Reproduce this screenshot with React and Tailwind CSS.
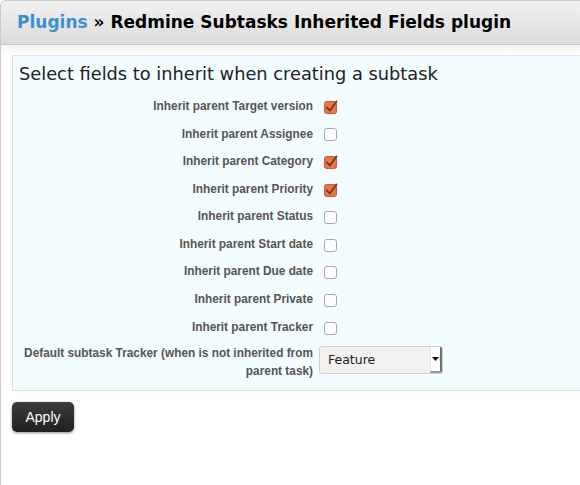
import React from 'react';

const fields = [
  { label: 'Inherit parent Target version', checked: true },
  { label: 'Inherit parent Assignee', checked: false },
  { label: 'Inherit parent Category', checked: true },
  { label: 'Inherit parent Priority', checked: true },
  { label: 'Inherit parent Status', checked: false },
  { label: 'Inherit parent Start date', checked: false },
  { label: 'Inherit parent Due date', checked: false },
  { label: 'Inherit parent Private', checked: false },
  { label: 'Inherit parent Tracker', checked: false },
];

const Checkbox = ({ checked }) => (
  <svg width="14" height="14" viewBox="0 0 14 14" className="ml-[5px] block">
    {checked ? (
      <>
        <rect x="0.5" y="1.5" width="12" height="12" rx="2" fill="#e8734a" stroke="#c85d38" />
        <path d="M3 7.5 L5.8 10.5 L12.5 1.5" fill="none" stroke="#6a3626" strokeWidth="1.8" strokeLinecap="round" strokeLinejoin="round" />
      </>
    ) : (
      <rect x="0.5" y="1.5" width="12" height="12" rx="2.5" fill="#ffffff" stroke="#a9a9a9" />
    )}
  </svg>
);

const App = () => {
  return (
    <div className="w-[580px] h-[485px] overflow-hidden bg-white" style={{ fontFamily: '"Liberation Sans", Arial, sans-serif' }}>
      <div className="w-[620px] h-[520px] border-l border-t border-[#c9c9c9] rounded-tl-[6px] overflow-hidden">
        {/* Header */}
        <div className="h-[44px] bg-gradient-to-b from-[#f1f1f1] to-[#dcdcdc] border-b border-[#c6c6c6] flex items-center pl-[16px]">
          <h2 className="text-[17px] font-bold text-black" style={{ fontFamily: '"DejaVu Sans", sans-serif' }}>
            <span className="text-[#3d8fd0]">Plugins</span> » Redmine Subtasks Inherited Fields plugin
          </h2>
        </div>
        <div className="h-[10px] bg-gradient-to-b from-[#f3f3f3] to-white" />

        {/* Settings box */}
        <div className="ml-[11px] border border-[#dfe3e3] bg-[#f3fcff] pt-[7px] pb-[10px]">
          <h3 className="pl-[6px] text-[17.8px] leading-[22px] text-[#222]" style={{ fontFamily: '"DejaVu Sans", sans-serif' }}>
            Select fields to inherit when creating a subtask
          </h3>
          <div className="mt-[8px]">
            {fields.map((f) => (
              <div key={f.label} className="flex items-center h-[27.6px]">
                <label className="w-[300px] text-right text-[11.85px] font-bold text-[#555]">{f.label}</label>
                <div className="pl-[6px]">
                  <Checkbox checked={f.checked} />
                </div>
              </div>
            ))}
            <div className="flex items-start mt-[3px]">
              <label className="w-[300px] text-right text-[11.85px] leading-[18px] font-bold text-[#555]">
                Default subtask Tracker (when is not inherited from parent task)
              </label>
              <div className="pl-[6px] pt-[2px]">
                <div className="w-[124px] h-[28px] flex items-stretch rounded-[3px] border border-[#cfcfcf] bg-[#f2f1ef]">
                  <span className="flex-1 flex items-center pl-[8px] text-[12.5px] text-[#222]" style={{ fontFamily: '"DejaVu Sans", sans-serif' }}>
                    Feature
                  </span>
                  <span className="w-[12px] flex items-center justify-center bg-white border-l border-[#e3e3e3] border-r-2 border-b-2 border-r-[#6f6f6f] border-b-[#9a9a9a] rounded-r-[2px]">
                    <svg width="7" height="4" viewBox="0 0 7 4"><path d="M0 0 H7 L3.5 4 Z" fill="#111" /></svg>
                  </span>
                </div>
              </div>
            </div>
          </div>
        </div>

        {/* Apply */}
        <div className="ml-[11px] mt-[11px]">
          <button className="w-[62px] h-[30px] rounded-[5px] bg-gradient-to-b from-[#3c3c3c] to-[#202020] text-white text-[14px] shadow-[0_1px_3px_rgba(0,0,0,0.45)]">
            Apply
          </button>
        </div>
      </div>
    </div>
  );
};

export default App;
